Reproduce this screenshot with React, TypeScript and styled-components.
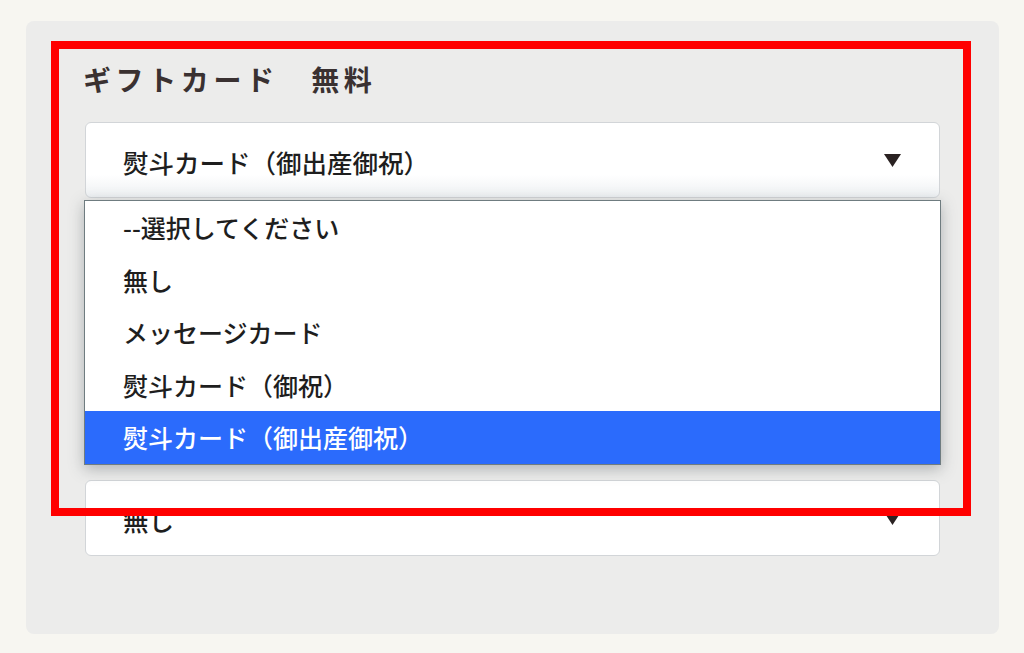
import React from "react";
import styled, { createGlobalStyle } from "styled-components";

const GlobalStyle = createGlobalStyle`
  html, body {
    margin: 0;
    padding: 0;
    background: #f7f6f1;
  }
  body {
    font-family: "Noto Sans CJK JP", "Noto Sans", sans-serif;
    color: #1e1e1e;
  }
`;

const options = [
  "--選択してください",
  "無し",
  "メッセージカード",
  "熨斗カード（御祝）",
  "熨斗カード（御出産御祝）",
];

const selected = 4;

const Arrow = () => (
  <svg width="17" height="13" viewBox="0 0 17 13">
    <polygon points="0,0 17,0 8.5,13" fill="#2a2222" />
  </svg>
);

const App = () => {
  return (
    <Page>
      <GlobalStyle />
      <Panel>
        <Heading>ギフトカード　無料</Heading>
        <SelectWrap>
          <SelectBox $raised>
            <span>熨斗カード（御出産御祝）</span>
            <Arrow />
          </SelectBox>
          <Dropdown>
            {options.map((opt, i) => (
              <Option key={opt} $active={i === selected}>
                {opt}
              </Option>
            ))}
          </Dropdown>
        </SelectWrap>
        <Field>
          <SelectBox>
            <span>無し</span>
            <Arrow />
          </SelectBox>
        </Field>
      </Panel>
      <Highlight />
    </Page>
  );
};

const Page = styled.div`
  position: relative;
  padding: 21px 25px 19px 26px;
  height: 653px;
  box-sizing: border-box;
`;

const Panel = styled.div`
  background: #ececeb;
  border-radius: 8px;
  height: 613px;
  box-sizing: border-box;
  padding: 37px 59px 0;
`;

const Heading = styled.h2`
  margin: 0 0 22px -2px;
  font-size: 28px;
  line-height: 42px;
  font-weight: 700;
  letter-spacing: 4.6px;
  color: #3a3131;
`;

const SelectWrap = styled.div`
  position: relative;
`;

const Field = styled.div`
  margin-top: 282px;
`;

const SelectBox = styled.div<{ $raised?: boolean }>`
  display: flex;
  align-items: center;
  justify-content: space-between;
  height: 76px;
  box-sizing: border-box;
  padding: 0 38px 0 37px;
  background: ${(p) =>
    p.$raised
      ? "linear-gradient(#ffffff 0%, #ffffff 70%, #eef1f3 100%)"
      : "#ffffff"};
  border: 1px solid #d2d5d8;
  border-radius: 6px;
  font-size: 25.5px;
  font-weight: 500;
  color: #1e1e1e;

  span {
    transform: translateY(1px);
  }
`;

const Dropdown = styled.ul`
  position: absolute;
  top: calc(100% + 2px);
  left: -1px;
  right: -1px;
  margin: 0;
  padding: 0;
  list-style: none;
  background: #ffffff;
  border: 1px solid #6f7c80;
  box-shadow: 0 4px 14px rgba(60, 70, 75, 0.35);
  z-index: 2;
`;

const Option = styled.li<{ $active?: boolean }>`
  display: flex;
  align-items: center;
  height: 52.5px;
  padding-left: 38px;
  font-size: 25px;
  font-weight: 500;
  color: ${(p) => (p.$active ? "#ffffff" : "#1e1e1e")};
  background: ${(p) => (p.$active ? "#2b6bfc" : "transparent")};
`;

const Highlight = styled.div`
  position: absolute;
  left: 51px;
  top: 41px;
  width: 920px;
  height: 475px;
  box-sizing: border-box;
  border: 8px solid #ff0000;
  z-index: 3;
  pointer-events: none;
`;

export default App;
